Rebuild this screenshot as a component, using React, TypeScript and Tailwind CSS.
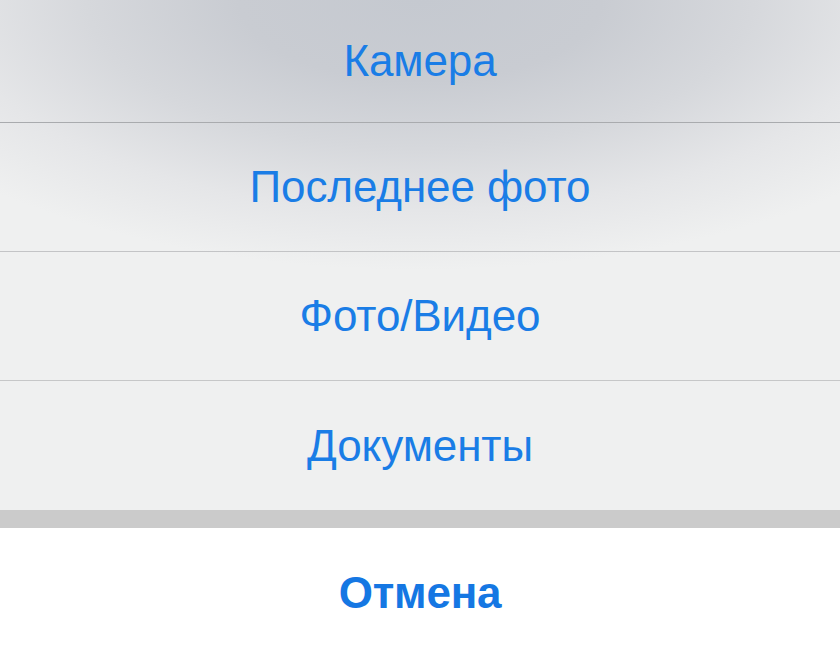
import React from 'react';

const items = ['Камера', 'Последнее фото', 'Фото/Видео', 'Документы'];
const heights = ['h-[122px]', 'h-[128px]', 'h-[128px]', 'h-[129px]'];
const lines = ['bg-[#a9abae]', 'bg-[#c3c4c6]', 'bg-[#c6c7c8]'];

export default function App() {
  return (
    <div className="w-[840px] h-[651px] flex flex-col overflow-hidden font-['Liberation_Sans',Arial,sans-serif]">
      {/* blurred sheet */}
      <div className="flex flex-col bg-[#eff0f0] bg-[radial-gradient(ellipse_72%_270px_at_50%_0px,#c5c9d0_0%,#c9ccd2_30%,#d6d8dc_55%,#e5e6e8_78%,#eff0f0_100%)]">
        {items.map((label, i) => (
          <div key={label} className="flex flex-col">
            <div className={`${heights[i]} flex items-center justify-center`}>
              <span className="text-[44px] leading-none text-[#1a7de6] tracking-[-0.1px]">{label}</span>
            </div>
            {i < items.length - 1 && <div className={`h-px ${lines[i]}`} />}
          </div>
        ))}
      </div>
      <div className="h-[18px] bg-[#cbcbcb]" />
      <div className="flex-1 bg-white flex items-center justify-center pt-[6px]">
        <span className="text-[44px] leading-none font-bold text-[#1577e3] tracking-[-0.2px]">Отмена</span>
      </div>
    </div>
  );
}
